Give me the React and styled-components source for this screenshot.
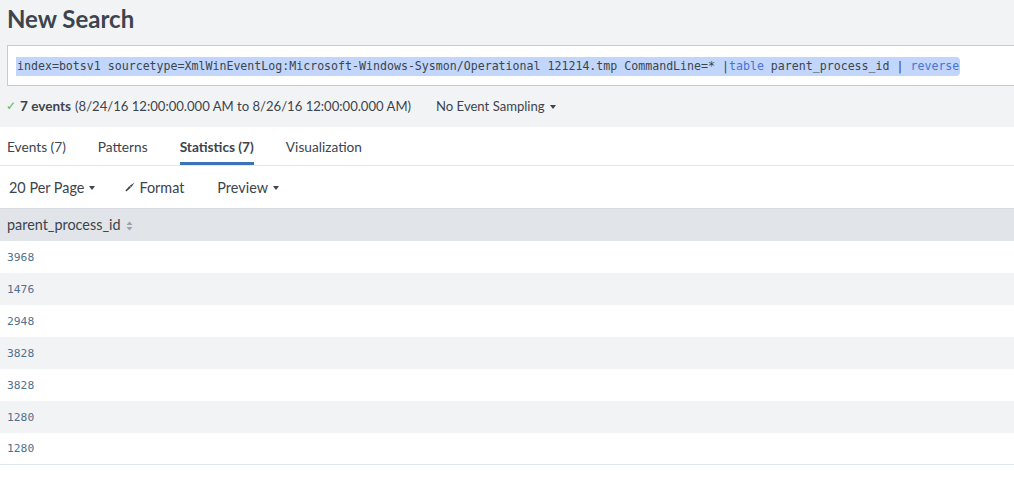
import React from "react";
import styled, { createGlobalStyle } from "styled-components";

const Global = createGlobalStyle`
  html, body { margin: 0; padding: 0; background: #fff; }
  body { font-family: "Lato", "Liberation Sans", sans-serif; color: #3c444d; }
  * { box-sizing: border-box; }
`;

const Page = styled.div`
  width: 1014px;
  height: 480px;
  overflow: hidden;
  background: #fff;
`;

const Header = styled.div`
  background: #f2f3f5;
  padding: 6px 0 0 7px;
  height: 127px;
  display: flex;
  flex-direction: column;
`;

const Title = styled.h1`
  margin: 0;
  font-size: 24px;
  font-weight: 700;
  line-height: 26px;
  color: #3c444d;
`;

const SearchBox = styled.div`
  margin-top: 13px;
  height: 41px;
  background: #fff;
  border: 1px solid #c3cbd4;
  border-right: none;
  padding: 8px 0 0 8px;
`;

const Query = styled.span`
  display: inline-block;
  font-family: "DejaVu Sans Mono", "Liberation Mono", monospace;
  font-size: 11.6px;
  line-height: 19px;
  height: 19px;
  padding: 0 1px;
  background: #c2d6fb;
  border-radius: 0 4px 4px 0;
  color: #3c444d;
  white-space: pre;
`;

const Kw = styled.span`
  color: #4a72d4;
`;

const Status = styled.div`
  display: flex;
  align-items: center;
  margin-top: 12px;
  font-size: 13.1px;
  line-height: 16px;
  color: #3c444d;
`;

const Check = styled.span`
  color: #5cb85c;
  font-size: 12px;
  margin: 0 4px 0 -1px;
`;

const Bold = styled.b`
  font-weight: 700;
  font-size: 13.6px;
  margin-right: 4px;
`;

const Sampling = styled.span`
  margin-left: 25px;
  display: inline-flex;
  align-items: center;
  gap: 5px;
`;

const Caret = styled.span`
  display: inline-block;
  width: 0;
  height: 0;
  border-left: 3.5px solid transparent;
  border-right: 3.5px solid transparent;
  border-top: 4.5px solid #3c444d;
  margin-top: 1px;
`;

const Tabs = styled.div`
  display: flex;
  height: 39px;
  border-bottom: 1px solid #e1e6eb;
  padding-left: 7px;
`;

const Tab = styled.div`
  display: flex;
  align-items: center;
  height: 38px;
  margin-right: ${(p) => p.$mr}px;
  font-size: 13.7px;
  font-weight: ${(p) => (p.$active ? 700 : 400)};
  color: #3c444d;
  border-bottom: 3px solid ${(p) => (p.$active ? "#3c72b8" : "transparent")};
  padding-top: 3px;
`;

const Toolbar = styled.div`
  display: flex;
  align-items: center;
  height: 42px;
  padding-left: 9px;
  font-size: 14.4px;
  color: #3c444d;
`;

const ToolButton = styled.span`
  display: inline-flex;
  align-items: center;
  gap: ${(p) => p.$gap}px;
  margin-right: ${(p) => p.$mr}px;
`;

const Table = styled.table`
  width: 100%;
  border-collapse: collapse;
  border-bottom: 1px solid #e1e6eb;
`;

const Th = styled.th`
  background: #e1e4e8;
  height: 32px;
  text-align: left;
  padding: 0 0 0 7px;
  font-weight: 400;
  font-size: 14.4px;
  color: #3c444d;
  border-top: 1px solid #d8dce2;
`;

const Td = styled.td`
  height: 32px;
  padding: 1px 0 0 7px;
  font-family: "DejaVu Sans Mono", "Liberation Mono", monospace;
  font-size: 11.3px;
  color: #52708f;
  background: ${(p) => (p.$odd ? "#f2f3f5" : "#fff")};
`;

const SortIcon = () => (
  <svg width="7" height="10" viewBox="0 0 7 10" style={{ marginLeft: 5, verticalAlign: "-1px" }}>
    <path d="M3.5 0.5 L6.5 4 L0.5 4 Z" fill="#9aa3ad" />
    <path d="M3.5 9.5 L6.5 6 L0.5 6 Z" fill="#9aa3ad" />
  </svg>
);

const BrushIcon = () => (
  <svg width="10" height="10" viewBox="0 0 10 10">
    <path d="M9.6 0.4 L6.2 5.2 L4.8 3.8 Z" fill="#3c444d" />
    <path d="M4.5 4.1 L5.9 5.5 L1.4 9.6 L0.4 8.6 Z" fill="#3c444d" />
  </svg>
);

const rows = ["3968", "1476", "2948", "3828", "3828", "1280", "1280"];

export default function App() {
  return (
    <Page>
      <Global />
      <Header>
        <Title>New Search</Title>
        <SearchBox>
          <Query>
            {"index=botsv1 sourcetype=XmlWinEventLog:Microsoft-Windows-Sysmon/Operational 121214.tmp CommandLine=* |"}
            <Kw>table</Kw>
            {" parent_process_id | "}
            <Kw>reverse</Kw>
          </Query>
        </SearchBox>
        <Status>
          <Check>✓</Check>
          <Bold>7 events</Bold>
          (8/24/16 12:00:00.000 AM to 8/26/16 12:00:00.000 AM)
          <Sampling>
            No Event Sampling <Caret />
          </Sampling>
        </Status>
      </Header>
      <Tabs>
        <Tab $mr={32}>Events (7)</Tab>
        <Tab $mr={32}>Patterns</Tab>
        <Tab $mr={32} $active>
          Statistics (7)
        </Tab>
        <Tab $mr={0}>Visualization</Tab>
      </Tabs>
      <Toolbar>
        <ToolButton $mr={30} $gap={5}>
          20 Per Page <Caret />
        </ToolButton>
        <ToolButton $mr={33} $gap={4}>
          <BrushIcon /> Format
        </ToolButton>
        <ToolButton $mr={0} $gap={5}>
          Preview <Caret />
        </ToolButton>
      </Toolbar>
      <Table>
        <thead>
          <tr>
            <Th>
              parent_process_id
              <SortIcon />
            </Th>
          </tr>
        </thead>
        <tbody>
          {rows.map((r, i) => (
            <tr key={i}>
              <Td $odd={i % 2 === 1}>{r}</Td>
            </tr>
          ))}
        </tbody>
      </Table>
    </Page>
  );
}
